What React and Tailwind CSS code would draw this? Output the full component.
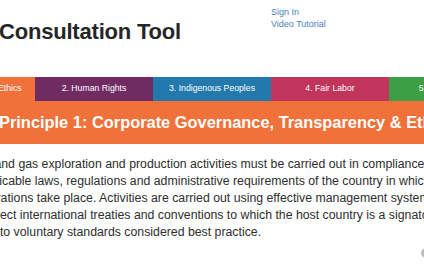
import React from 'react';

const tabs = [
  { label: '1. Governance & Ethics', color: 'bg-[#f07139]' },
  { label: '2. Human Rights', color: 'bg-[#712b63]' },
  { label: '3. Indigenous Peoples', color: 'bg-[#2379ab]' },
  { label: '4. Fair Labor', color: 'bg-[#c1345c]' },
  { label: '5. Environment', color: 'bg-[#3c9f45]' },
];

const lines = [
  'Oil and gas exploration and production activities must be carried out in compliance with',
  'applicable laws, regulations and administrative requirements of the country in which',
  'operations take place. Activities are carried out using effective management systems and',
  'respect international treaties and conventions to which the host country is a signatory,',
  'and to voluntary standards considered best practice.',
];

const App = () => {
  return (
    <div className="relative w-[424px] h-[265px] overflow-hidden bg-white" style={{ fontFamily: '"Liberation Sans", Arial, sans-serif' }}>
      {/* header */}
      <div className="flex h-[77px]">
        <div className="w-[272px] shrink-0 -ml-px pt-[20px]">
          <h1 className="text-[22px] leading-[24px] font-bold text-[#262626] tracking-[-0.2px]">Consultation Tool</h1>
        </div>
        <div className="pt-[6px] flex flex-col text-[9px] leading-[12px] text-[#4a7fc4]">
          <a>Sign In</a>
          <a>Video Tutorial</a>
        </div>
      </div>

      {/* principle tabs */}
      <div className="flex ml-[-83px] h-[24px]">
        {tabs.map((t) => (
          <div key={t.label} className={`w-[118px] shrink-0 flex items-center justify-center text-white text-[8.7px] ${t.color}`}>
            {t.label}
          </div>
        ))}
      </div>

      <div className="bg-[#f07139] h-[43px] flex items-center -ml-px">
        <h2 className="whitespace-nowrap text-white font-bold text-[16.4px] leading-none">
          Principle 1: Corporate Governance, Transparency &amp; Ethics
        </h2>
      </div>

      <p className="mt-[12px] ml-[-24px] whitespace-nowrap text-[12.3px] leading-[17px] text-[#2e2e2e]">
        {lines.map((l, i) => (
          <span key={i} className="block">{l}</span>
        ))}
      </p>

      <div className="absolute right-[-7px] top-[248px] w-[10px] h-[10px] rounded-full bg-[#bdbdbd]"></div>
    </div>
  );
};

export default App;
